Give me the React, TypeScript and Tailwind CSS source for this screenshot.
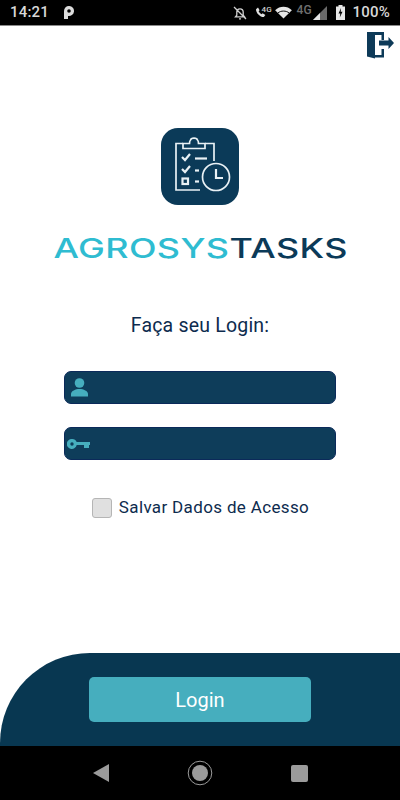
import { useState } from "react";

function StatusBar() {
  return (
    <div className="h-[26px] bg-black border-b border-[#8a8a8a] flex items-center pl-[10px] pr-[10px] text-[#d8d8d8] text-[14px] font-['Roboto',sans-serif] shrink-0">
      <span className="font-medium text-[15px] tracking-[0.2px]">14:21</span>
      <svg className="ml-[15px]" width="10" height="13" viewBox="0 0 10 13">
        <path d="M0 5a5 5 0 1 1 4 4.900V13H0z M5 3.200a1.800 1.800 0 1 0 0 3.600 1.800 1.800 0 0 0 0-3.600z" fill="#dcdcdc" fillRule="evenodd" />
      </svg>
      <div className="ml-auto flex items-center">
        {/* muted bell */}
        <svg width="14" height="14" viewBox="0 0 14 14" fill="none" stroke="#d0d0d0" strokeWidth="1.300">
          <path d="M2.500 10.800h9l-1.300-1.600V6a3.200 3.200 0 0 0-6.400 0v3.200z M6 12.800h2 M1 1l12 12" />
        </svg>
        {/* call + 4G */}
        <svg className="ml-[8px]" width="12" height="13" viewBox="0 0 12 13">
          <path d="M1 3.200 3 1.500l1.600 2.800-1 1a6 6 0 0 0 3 3l1-1 2.800 1.600-1.600 2.200C4.800 11 1 7 1 3.200z" fill="#e0e0e0" />
        </svg>
        <span className="text-[8px] leading-none -ml-[5px] -mt-[5px] w-[8px] text-[#d0d0d0] font-medium">4G</span>
        {/* wifi */}
        <svg className="ml-[5px]" width="17" height="13" viewBox="0 0 18 14">
          <path d="M0 4.500C5-.5 13-.5 18 4.500L9 13.500z" fill="#e6e6e6" />
          <path d="M3 7.500C6 4.800 12 4.800 15 7.500" fill="none" stroke="#000" strokeWidth="1" />
        </svg>
        <span className="ml-[5px] w-[14px] text-[12px] leading-none -mt-[5px] text-[#6f6f6f] font-medium">4G</span>
        {/* signal */}
        <svg className="ml-[2px]" width="14" height="14" viewBox="0 0 14 14">
          <path d="M0 14 14 0v14z" fill="#6a6a6a" />
          <path d="M0 14 7 7v7z" fill="#e6e6e6" />
        </svg>
        {/* battery */}
        <svg className="ml-[9px]" width="9" height="15" viewBox="0 0 9 15">
          <path d="M2.500 0h4v1.500H9V15H0V1.500h2.500z" fill="#e6e6e6" />
          <path d="M5 3 2.500 8.500H4.300L3.800 12.500 6.500 6.800H4.700z" fill="#000" />
        </svg>
        <span className="ml-[8px] text-[15px] font-medium tracking-[0.2px]">100%</span>
      </div>
    </div>
  );
}

function LogoutIcon() {
  return (
    <svg width="27" height="27" viewBox="0 0 27 27" fill="#0d3a58">
      <path d="M0 0H17V8H14.500V3H8V26.500L0 24.500Z" />
      <path d="M8 23H14.500V17H17V25.500H8Z" />
      <path d="M12 8.500H21.500V5L27 11L21.500 17V13.500H12Z" />
    </svg>
  );
}

function AppLogo() {
  return (
    <div className="w-[78px] h-[77px] rounded-[17px] bg-[#0b3a58] flex items-center justify-center">
      <svg width="78" height="77" viewBox="0 0 78 77" fill="none" stroke="#e9f1f5" strokeWidth="1.700">
        <path d="M22 15.500H15V62H39" />
        <path d="M44 15.500H53V33" />
        <path d="M22 20.500H44V15.500H37.500C37.500 14.500 37.500 13 36.500 12C36 9.500 30 9.500 29.500 12C28.500 13 28.500 14.500 28.500 15.500H22z" />
        <path d="M21 29l3 3 5-6" strokeWidth="2.200" />
        <path d="M34 30.500H46" strokeWidth="2.200" />
        <path d="M21 41l3 3 5-6" strokeWidth="2.200" />
        <path d="M34 42.500H38" strokeWidth="2.200" />
        <rect x="21.500" y="50.500" width="5.500" height="5.500" strokeWidth="2.200" />
        <path d="M34 53.500H38" strokeWidth="2.200" />
        <circle cx="55" cy="49" r="13.500" fill="#0b3a58" />
        <path d="M55 41V50H62" strokeWidth="2.200" />
      </svg>
    </div>
  );
}

function UserIcon() {
  return (
    <svg width="17" height="19" viewBox="0 0 17 19" fill="#46aebe">
      <circle cx="8.500" cy="5" r="4.800" />
      <path d="M0 18.500V16C0 13 4.500 11 8.500 11S17 13 17 16V18.500z" />
    </svg>
  );
}

function KeyIcon() {
  return (
    <svg width="23" height="10" viewBox="0 0 23 10" fill="#46aebe">
      <path fillRule="evenodd" d="M5 0a5 5 0 0 1 4.700 3H23v3h-1v3h-5V6H9.700A5 5 0 1 1 5 0zM5 3.300a1.700 1.700 0 1 0 0 3.400 1.700 1.700 0 0 0 0-3.400z" />
    </svg>
  );
}

function NavBar() {
  return (
    <div className="h-[54px] bg-black flex items-center justify-center gap-[78px] shrink-0">
      <svg width="16" height="18" viewBox="0 0 16 18">
        <path d="M16 0v18L0 9z" fill="#9b9b9b" />
      </svg>
      <svg width="26" height="26" viewBox="0 0 26 26">
        <circle cx="13" cy="13" r="11.800" fill="none" stroke="#9b9b9b" strokeWidth="1" />
        <circle cx="13" cy="13" r="8" fill="#9b9b9b" />
      </svg>
      <div className="w-[17px] h-[17px] rounded-[2px] bg-[#9b9b9b]" />
    </div>
  );
}

export default function App() {
  const [saved, setSaved] = useState(false);

  return (
    <div className="w-[400px] h-[800px] flex flex-col overflow-hidden bg-white font-['Roboto',sans-serif]">
      <StatusBar />

      <div className="flex-1 flex flex-col">
        <div className="flex justify-end pt-[6px] pr-[6px]">
          <LogoutIcon />
        </div>

        <div className="flex justify-center mt-[69px]">
          <AppLogo />
        </div>

        <div className="flex justify-center mt-[27px] h-[32px] items-center pl-[2px]">
          <span className="text-[27px] leading-none font-medium font-['Inter',sans-serif] whitespace-nowrap tracking-[0.3px] [transform:scaleX(1.33)]">
            <span className="text-[#2fbcd1]">AGROSYS</span>
            <span className="text-[#0b3a58]">TASKS</span>
          </span>
        </div>

        <p className="mt-[49px] text-center text-[19.500px] leading-[26px] text-[#0d2b4e] tracking-[0.2px]">Faça seu Login:</p>

        <div className="mt-[32px] mx-[64px] flex flex-col gap-[23px]">
          <div className="h-[33px] rounded-[7px] bg-[#0e3d5a] border border-[#0b2a5a] flex items-center pl-[6px]">
            <UserIcon />
          </div>
          <div className="h-[33px] rounded-[7px] bg-[#0e3d5a] border border-[#0b2a5a] flex items-center pl-[2px]">
            <KeyIcon />
          </div>
        </div>

        <label className="mt-[35px] pl-[1px] flex items-center justify-center gap-[7px]">
          <input
            type="checkbox"
            checked={saved}
            onChange={(e) => setSaved(e.target.checked)}
            className="appearance-none w-[20px] h-[20px] rounded-[3px] bg-[#e0e0e0] border border-[#b5b5b5]"
          />
          <span className="text-[17px] text-[#0d2b4e] tracking-[0.35px]">Salvar Dados de Acesso</span>
        </label>

        <div className="mt-auto h-[93px] bg-[#083751] rounded-tl-[90px] flex justify-center pt-[24px]">
          <button className="w-[222px] h-[45px] rounded-[5px] bg-[#46aebe] text-white text-[20px]">Login</button>
        </div>
      </div>

      <NavBar />
    </div>
  );
}
